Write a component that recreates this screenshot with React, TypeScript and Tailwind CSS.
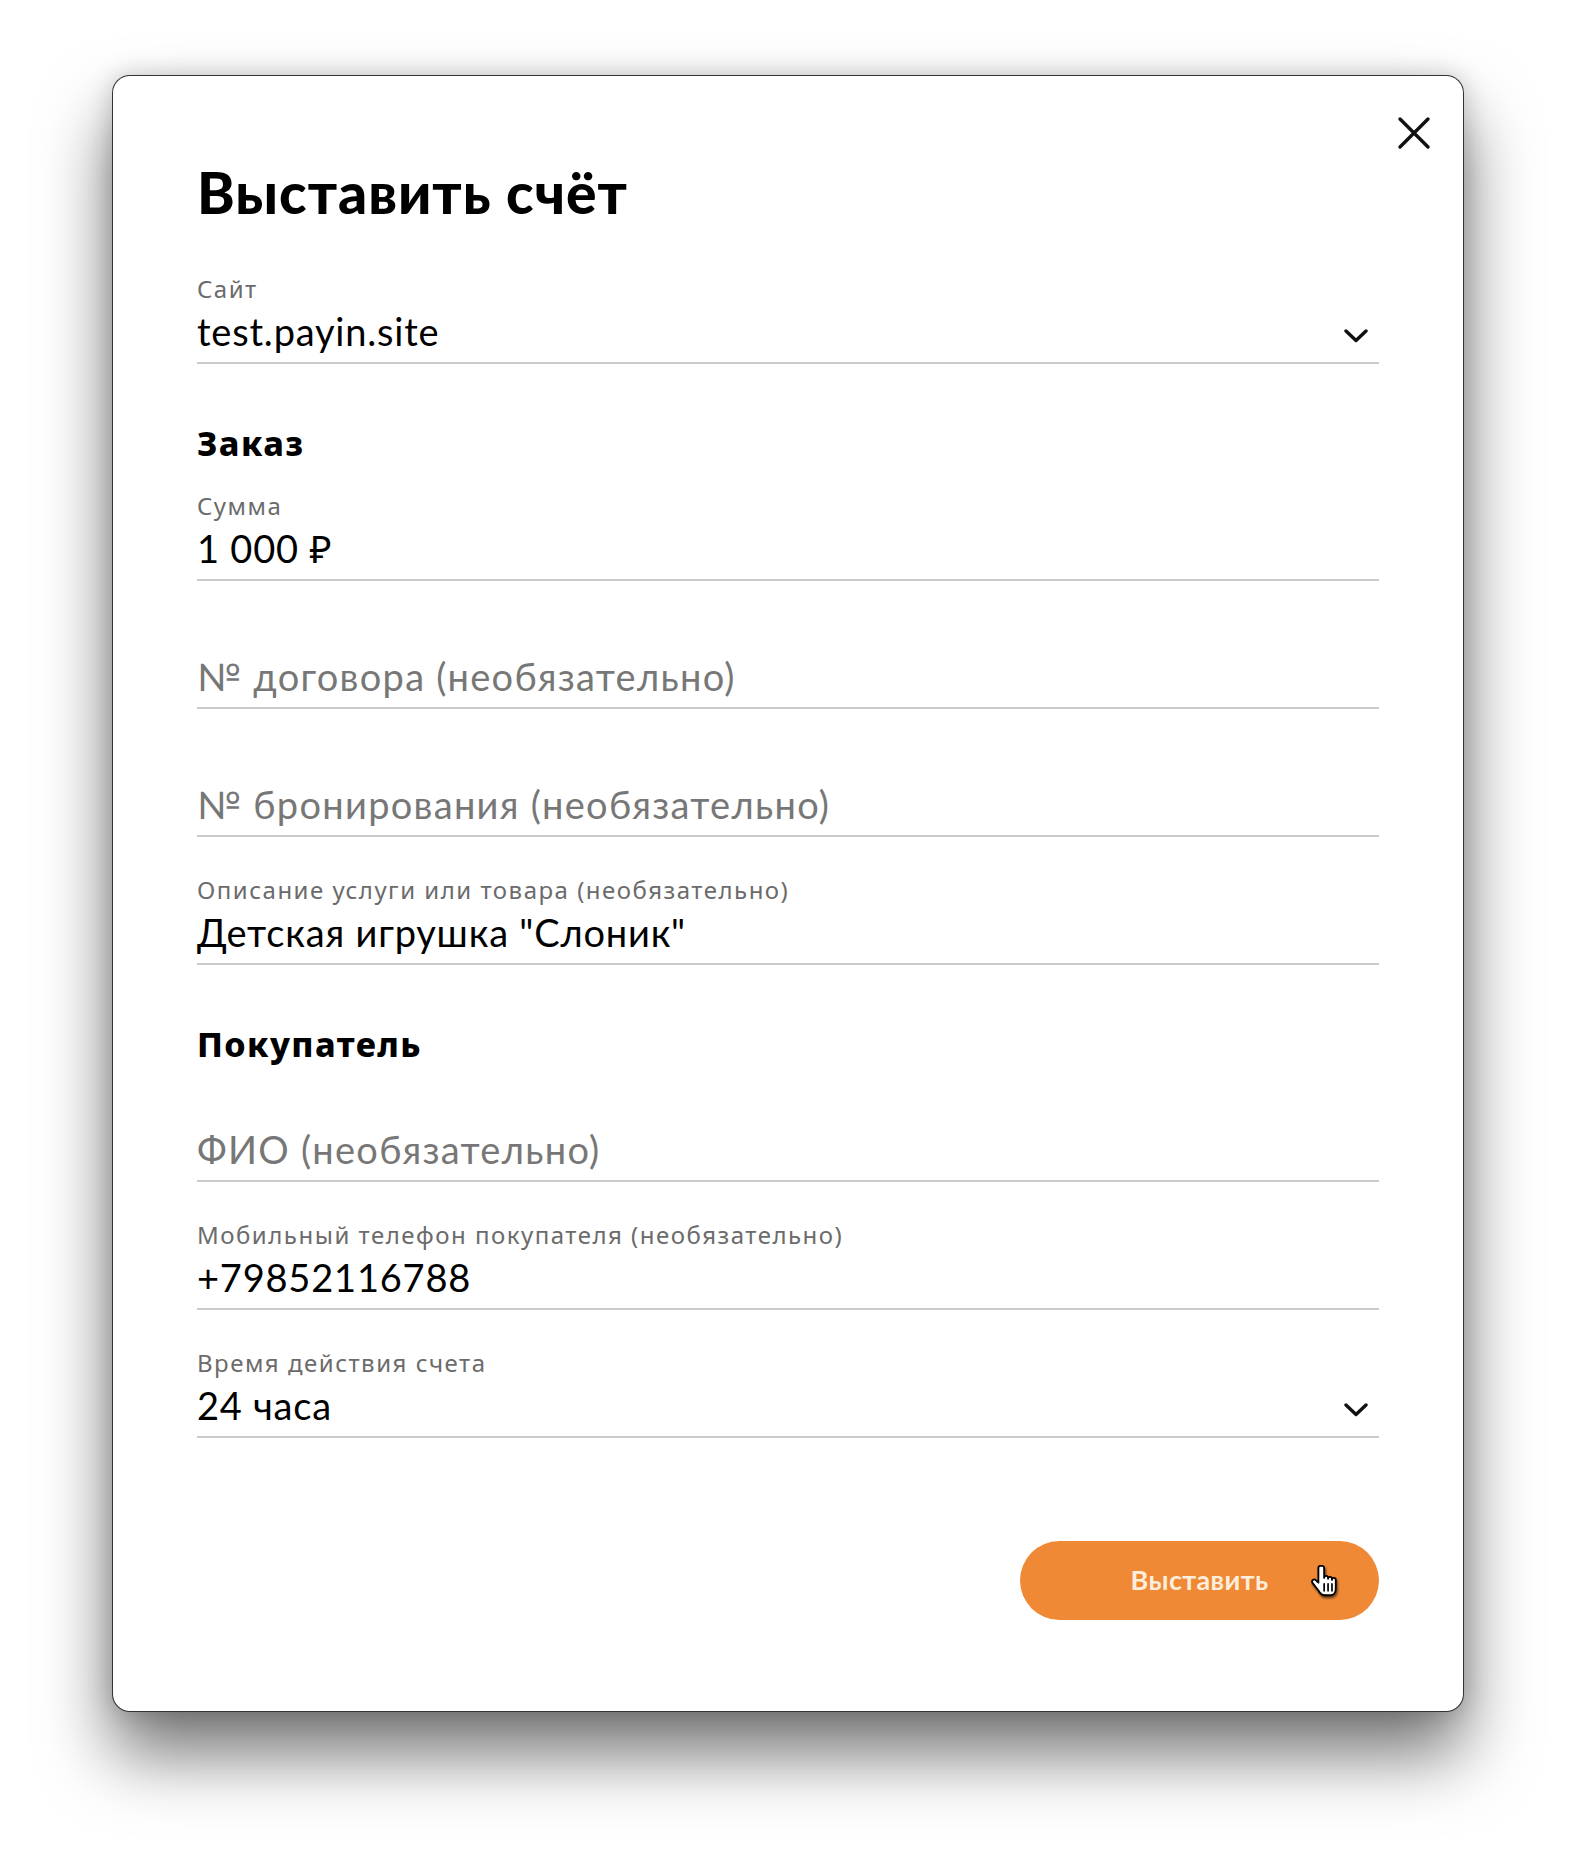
import type { ReactNode } from "react";

const FONT = { fontFamily: "Lato, 'Noto Sans', sans-serif" };
const WIDE = { fontFamily: "'Noto Sans', 'Open Sans', sans-serif" };

type Field = {
  label?: string;
  value?: string;
  placeholder?: string;
  select?: boolean;
};

const ORDER: Field[] = [
  { label: "Сумма", value: "1 000 ₽" },
  { placeholder: "№ договора (необязательно)" },
  { placeholder: "№ бронирования (необязательно)" },
  { label: "Описание услуги или товара (необязательно)", value: "Детская игрушка \"Слоник\"" },
];

const BUYER: Field[] = [
  { placeholder: "ФИО (необязательно)" },
  { label: "Мобильный телефон покупателя (необязательно)", value: "+79852116788" },
  { label: "Время действия счета", value: "24 часа", select: true },
];

function Chevron() {
  return (
    <svg className="w-[24px] h-[14px] mr-[11px] mt-[10px] shrink-0" viewBox="0 0 24 14" fill="none">
      <path d="M2 2 L12 11.5 L22 2" stroke="#111" strokeWidth={3.4} strokeLinecap="round" strokeLinejoin="round" />
    </svg>
  );
}

function FormField({ label, value, placeholder, select }: Field) {
  return (
    <div className="border-b-2 border-[#cacaca]">
      <p className="text-[24px] leading-[28px] text-[#6b6b6b] h-[28px] tracking-[1.5px]" style={WIDE}>
        {label ?? ""}
      </p>
      <div className="mt-[6px] pb-[9px] flex items-center justify-between">
        {value ? (
          <span className="text-[38px] leading-[44px] text-black tracking-[0.8px]">{value}</span>
        ) : (
          <span className="text-[38px] leading-[44px] text-[#777] tracking-[1.3px]">{placeholder}</span>
        )}
        {select && <Chevron />}
      </div>
    </div>
  );
}

function Section({ title, children }: { title: string; children: ReactNode }) {
  return (
    <div className="mt-[59px]">
      <h2 className="text-[34px] leading-[40px] font-extrabold text-black mb-[29px] tracking-[1.4px]" style={WIDE}>
        {title}
      </h2>
      <div className="flex flex-col gap-[39px]">{children}</div>
    </div>
  );
}

function HandCursor() {
  return (
    <svg className="absolute left-[290px] top-[22px] w-[28px] h-[36px] drop-shadow-[1px_2px_1px_rgba(0,0,0,0.6)]" viewBox="0 0 20 24" fill="none">
      <path
        d="M7.4 1.2C6.5 1.2 6 1.9 6 2.7V13.2L4.3 11.5C3.6 10.8 2.5 10.8 1.9 11.4C1.3 12 1.4 12.9 1.9 13.5L5.9 18.6C7 20.6 8.3 22.2 10.6 22.2H14.4C16.9 22.2 18.4 20.2 18.4 17.7V11.2C18.4 10.4 17.8 9.8 17 9.8C16.3 9.8 15.7 10.4 15.7 11.2V10.4C15.7 9.6 15.1 9 14.3 9C13.5 9 12.9 9.6 12.9 10.4V9.8C12.9 9 12.3 8.4 11.5 8.4C10.7 8.4 10.1 9 10.1 9.8V2.7C10.1 1.9 9.5 1.2 8.7 1.2Z"
        fill="white"
        stroke="black"
        strokeWidth={1.3}
        strokeLinejoin="round"
      />
      <path d="M10.1 14V19M12.9 14V19M15.7 14V19" stroke="black" strokeWidth={1.2} strokeLinecap="round" />
    </svg>
  );
}

export default function App() {
  return (
    <div className="min-h-[1860px] bg-white pt-[75px]" style={FONT}>
      <div className="relative mx-auto w-[1352px] bg-white border border-black/80 rounded-[18px] shadow-[0_42px_70px_rgba(0,0,0,0.55),0_0_24px_rgba(0,0,0,0.18)] px-[84px] pt-[84px] pb-[91px]">
        {/* Close */}
        <button className="absolute top-[40px] right-[32px] w-[34px] h-[34px]">
          <svg viewBox="0 0 34 34" className="w-full h-full" fill="none">
            <path d="M3 3 L31 31 M31 3 L3 31" stroke="#111" strokeWidth={3.4} strokeLinecap="round" />
          </svg>
        </button>

        <h1 className="text-[57px] leading-[64px] font-black text-black tracking-[1px]">Выставить счёт</h1>

        <div className="mt-[51px]">
          <FormField label="Сайт" value="test.payin.site" select />
        </div>

        <Section title="Заказ">
          {ORDER.map((f, i) => (
            <FormField key={i} {...f} />
          ))}
        </Section>

        <Section title="Покупатель">
          {BUYER.map((f, i) => (
            <FormField key={i} {...f} />
          ))}
        </Section>

        <div className="mt-[103px] flex justify-end">
          <button className="relative w-[359px] h-[79px] rounded-full bg-[#ef8935] text-[27px] font-bold text-[#fdeedb] tracking-[0.4px] flex items-center justify-center">
            Выставить
            <HandCursor />
          </button>
        </div>
      </div>
    </div>
  );
}
